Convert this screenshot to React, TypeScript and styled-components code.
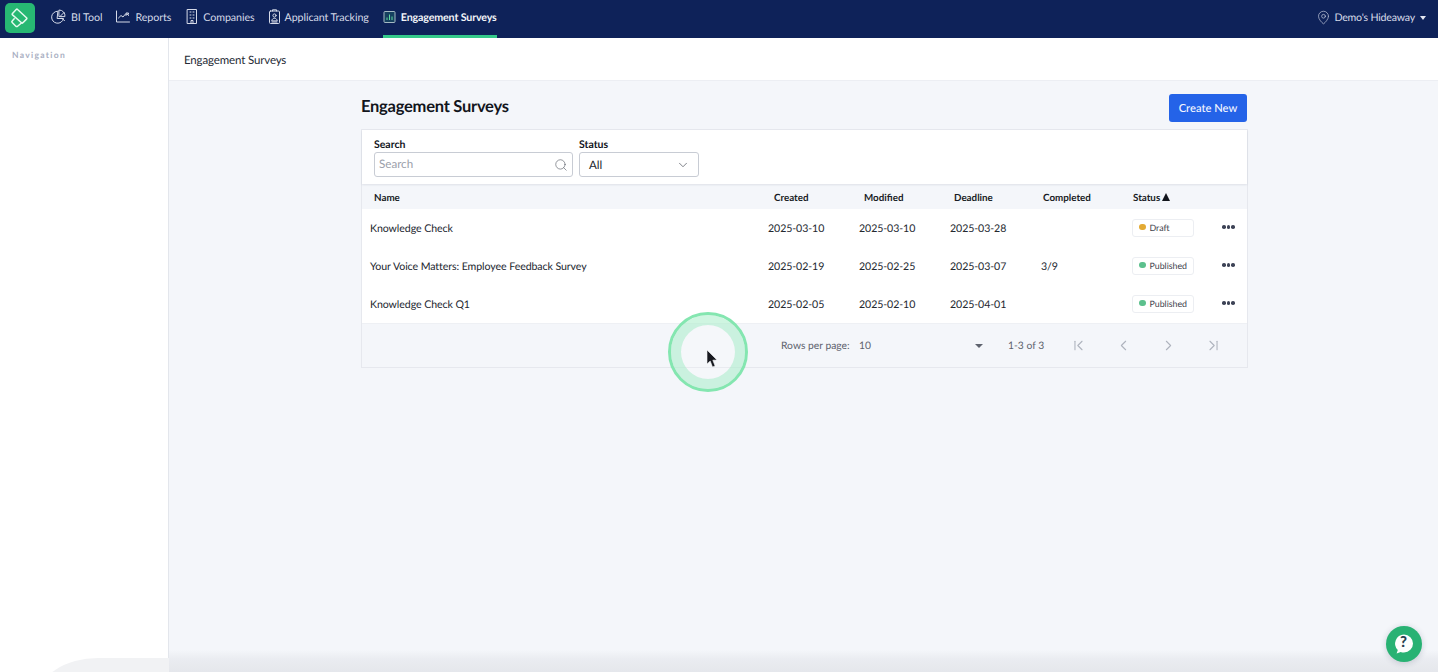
import React from "react";
import styled, { createGlobalStyle } from "styled-components";
import { ChevronDown, ChevronFirst, ChevronLast, ChevronLeft, ChevronRight, MapPin, Search } from "lucide-react";

const Global = createGlobalStyle`
  html, body { margin: 0; padding: 0; height: 100%; overflow: hidden; }
  body { font-family: Lato, "Liberation Sans", sans-serif; background: #fff; color: #1e2430; text-rendering: geometricPrecision; }
  * { box-sizing: border-box; }
`;

const Page = styled.div`
  position: relative;
  width: 1438px;
  height: 672px;
  display: flex;
  flex-direction: column;
  overflow: hidden;
`;

const TopBar = styled.header`
  height: 38px;
  flex: none;
  background: #0e2259;
  display: flex;
  align-items: stretch;
  padding: 0 12px 0 5px;
`;

const Logo = styled.div`
  width: 30px;
  height: 30px;
  margin: 3px 16px 0 0;
  border-radius: 5px;
  background: #27b873;
  display: flex;
  align-items: center;
  justify-content: center;
`;

const NavList = styled.nav`
  display: flex;
  align-items: stretch;
  gap: 14px;
`;

const NavItem = styled.a<{ $active?: boolean }>`
  display: flex;
  align-items: center;
  gap: 5px;
  height: 38px;
  font-size: 10.7px;
  letter-spacing: ${(p) => (p.$active ? "-0.15px" : "-0.08px")};
  font-weight: ${(p) => (p.$active ? 700 : 400)};
  color: ${(p) => (p.$active ? "#f2f4f8" : "#d5dae8")};
  border-bottom: 3px solid ${(p) => (p.$active ? "#35c98a" : "transparent")};
  svg { flex: none; margin-top: -2px; }
`;

const Location = styled.div`
  margin-left: auto;
  display: flex;
  align-items: center;
  gap: 3px;
  font-size: 10.6px;
  letter-spacing: -0.2px;
  color: #d5dae8;
  padding-bottom: 3px;
`;

const Caret = styled.span`
  width: 0;
  height: 0;
  border-left: 3.5px solid transparent;
  border-right: 3.5px solid transparent;
  border-top: 4px solid #e4e8f2;
  margin-left: 2px;
`;

const Body = styled.div`
  flex: 1;
  display: flex;
  min-height: 0;
`;

const Sidebar = styled.aside`
  width: 169px;
  flex: none;
  background: #fff;
  border-right: 1px solid #e3e6ec;
  padding: 12px;
`;

const SideTitle = styled.div`
  font-size: 8.5px;
  font-weight: 700;
  letter-spacing: 1.3px;
  color: #a9afc2;
`;

const Main = styled.main`
  flex: 1;
  background: #f4f6fa;
  min-width: 0;
`;

const Crumb = styled.div`
  height: 43px;
  background: #fff;
  border-bottom: 1px solid #eceef3;
  padding: 2px 15px 0;
  display: flex;
  align-items: center;
  font-size: 11.5px;
  letter-spacing: -0.14px;
  color: #262b36;
`;

const Content = styled.div`
  width: 887px;
  margin-left: 192px;
`;

const TitleRow = styled.div`
  height: 48px;
  display: flex;
  justify-content: space-between;
`;

const Title = styled.h1`
  margin: 14px 0 0;
  font-size: 16.5px;
  letter-spacing: -0.25px;
  line-height: 23px;
  font-weight: 700;
  color: #12151c;
`;

const CreateButton = styled.button`
  width: 78px;
  height: 28px;
  margin: 13px 1px 0 0;
  border: 0;
  border-radius: 3px;
  background: #2463e8;
  color: #f4f7ff;
  font: 500 11.2px Lato, sans-serif;
  text-rendering: geometricPrecision;
`;

const Card = styled.section`
  background: #fff;
  border: 1px solid #e6e8ee;
`;

const Filters = styled.div`
  height: 54px;
  padding: 8px 12px 0;
  display: flex;
  gap: 6px;
  box-shadow: 0 1px 2px rgba(30, 40, 70, 0.1);
  position: relative;
`;

const Field = styled.label<{ $width: number }>`
  width: ${(p) => p.$width}px;
  display: block;
`;

const FieldLabel = styled.div`
  font-size: 10.5px;
  font-weight: 700;
  line-height: 14px;
  color: #12151c;
`;

const InputBox = styled.div`
  height: 25px;
  border: 1px solid #c8ccd4;
  border-radius: 3px;
  background: #fff;
  display: flex;
  align-items: center;
  justify-content: space-between;
  padding: 0 4px;
  font-size: 11.6px;
  color: #9ba0aa;
`;

const SelectBox = styled(InputBox)`
  padding: 1px 8px 0 9px;
  color: #20242c;
  svg { margin-top: -1px; }
`;

const HeadRow = styled.div`
  height: 25px;
  padding-top: 2px;
  display: grid;
  grid-template-columns: 412px 90px 90px 89px 90px 1fr;
  align-items: center;
  background: #f4f6fa;
  font-size: 9.8px;
  font-weight: 700;
  color: #1a1d26;
`;

const HeadCell = styled.div<{ $first?: boolean }>`
  padding-left: ${(p) => (p.$first ? 12 : 0)}px;
  display: flex;
  align-items: center;
  gap: 2px;
`;

const SortUp = styled.span`
  width: 0;
  height: 0;
  border-left: 4.5px solid transparent;
  border-right: 4.5px solid transparent;
  border-bottom: 8px solid #12151c;
  margin-bottom: 1px;
`;

const Row = styled.div`
  height: 38px;
  padding-top: 2px;
  display: grid;
  grid-template-columns: 406px 91px 91px 91px 91px 90px 1fr;
  align-items: center;
  background: #fff;
  font-size: 10.6px;
  letter-spacing: -0.08px;
  color: #23272f;
`;

const NameCell = styled.div`
  padding-left: 8px;
`;

const Badge = styled.div`
  width: 62px;
  height: 18px;
  margin-top: -3px;
  border: 1px solid #eceef2;
  border-radius: 3px;
  display: flex;
  align-items: center;
  gap: 4px;
  padding: 0 0 1px 6px;
  font-size: 8.8px;
  letter-spacing: 0;
  color: #3c414b;
`;

const Dot = styled.span<{ $color: string }>`
  width: 6.5px;
  height: 6.5px;
  border-radius: 50%;
  background: ${(p) => p.$color};
`;

const More = styled.div`
  display: flex;
  gap: 1px;
  margin-top: -4px;
`;

const MoreDot = styled.span`
  width: 3.6px;
  height: 3.6px;
  border-radius: 50%;
  background: #3d4356;
`;

const Footer = styled.div`
  height: 44px;
  background: #f4f6fa;
  border-top: 1px solid #eef0f4;
  display: flex;
  align-items: center;
  padding-left: 419px;
  font-size: 10.3px;
  color: #5e636e;
`;

const RowsLabel = styled.span`
  width: 78px;
`;

const RowsValue = styled.span`
  width: 116px;
`;

const PageCaret = styled.span`
  width: 0;
  height: 0;
  border-left: 4px solid transparent;
  border-right: 4px solid transparent;
  border-top: 4px solid #5e636e;
  margin-right: 25px;
`;

const PageInfo = styled.span`
  width: 35px;
  margin-right: 27px;
  white-space: nowrap;
`;

const PagerGroup = styled.div`
  display: flex;
  gap: 28px;
  color: #aeb3bd;
`;

const Ripple = styled.div`
  position: absolute;
  left: 668px;
  top: 312px;
  width: 80px;
  height: 80px;
  border-radius: 50%;
  background: rgba(255, 255, 255, 0.15);
  border: 3px solid #84e6b0;
  box-shadow: inset 0 0 0 10px rgba(160, 235, 195, 0.5);
`;

const CursorWrap = styled.div`
  position: absolute;
  left: 706px;
  top: 350px;
  line-height: 0;
`;

const BottomFade = styled.div`
  position: absolute;
  left: 169px;
  right: 0;
  bottom: 0;
  height: 22px;
  background: linear-gradient(to bottom, rgba(225, 227, 232, 0), rgba(225, 227, 232, 0.5) 40%, rgba(225, 227, 232, 0.8));
  pointer-events: none;
`;

const SideCurve = styled.div`
  position: absolute;
  left: 38px;
  bottom: -40px;
  width: 131px;
  height: 54px;
  border-top-left-radius: 60px 40px;
  background: #f1f2f4;
`;

const HelpButton = styled.div`
  position: absolute;
  left: 1386px;
  top: 626px;
  width: 36px;
  height: 36px;
  border-radius: 50%;
  background: #28b273;
  display: flex;
  align-items: center;
  justify-content: center;
  box-shadow: 0 1px 6px rgba(30, 40, 70, 0.2);
`;

const HelpMark = styled.span`
  position: absolute;
  left: 14px;
  top: 7px;
  font: 900 15px Lato, sans-serif;
  color: #27404f;
`;

const stroke = { fill: "none", stroke: "currentColor", strokeWidth: 1, strokeLinecap: "round" as const, strokeLinejoin: "round" as const };

const LogoMark = () => (
  <svg width="18" height="20" viewBox="0 0 18 20" fill="none" stroke="#e6f9ef" strokeWidth="1.5" strokeLinejoin="round" strokeLinecap="round">
    <path d="M1.500 5.500 5.200 1.500a1 1 0 0 1 1.400 0l8.900 8.200a1 1 0 0 1 0 1.400l-3.600 3.700a1 1 0 0 1-1.400 0L1.500 6.900a1 1 0 0 1 0-1.400z" />
    <path d="M3.200 10.800 1.200 13a1 1 0 0 0 0 1.400l3.700 3.800a1.200 1.200 0 0 0 1.700 0L11 14.500" />
  </svg>
);

const PieIcon = () => (
  <svg width="15" height="15" viewBox="0 0 15 15" {...stroke}>
    <path d="M6.500 2.200a6 6 0 1 0 6 7.300H6.500z" />
    <path d="M8.300 1a5.600 5.600 0 0 1 5.600 6.600H8.300z" />
    <path d="M9 7.500 13 3.500M11 9.500l2.500 2" />
  </svg>
);

const LineChartIcon = () => (
  <svg width="14" height="13" viewBox="0 0 14 13" {...stroke}>
    <path d="M.5 1v11h13" />
    <path d="M2.500 8 5 5.500l2 1.500 2-2.500" />
    <path d="M10 5.500V3h2.500v1.200h-2.500M11.500 4.200l1 1.300" />
  </svg>
);

const BuildingIcon = () => (
  <svg width="13" height="15" viewBox="-2 0 13 15" {...stroke}>
    <rect x=".5" y=".5" width="9" height="14" />
    <path d="M3 3h1M6 3h1M3 6h1M6 6h1M3 9h1M6 9h1M4 14.500v-3h2v3" />
  </svg>
);

const BadgeIcon = () => (
  <svg width="11" height="15" viewBox="0 0 11 15" {...stroke}>
    <rect x=".5" y="2" width="10" height="12.500" rx="1" />
    <path d="M3.500 2V.8h4V2" />
    <circle cx="5.500" cy="6.500" r="1.600" />
    <path d="M2.800 11.500c.3-1.600 1.400-2.200 2.700-2.200s2.400.6 2.700 2.200zM3 13h5" />
  </svg>
);

const BarsIcon = () => (
  <svg width="13" height="12" viewBox="-0.500 0 13 12" fill="#15405f">
    <rect x=".5" y=".5" width="11" height="11" rx="1" stroke="#a4b9c3" strokeWidth="1" />
    <path d="M3.500 9V6.500M6 9V3.500M8.500 9V5.500" stroke="#5fd9a0" strokeWidth="1" />
  </svg>
);

const HelpBubble = () => (
  <svg width="22" height="22" viewBox="0 0 22 22">
    <path d="M11 1.500a9 9 0 0 1 0 18c-1.200 0-2.300-.2-3.300-.6L3.600 20.500l1.200-3.600A9 9 0 0 1 11 1.500z" fill="#fdfefd" />
  </svg>
);

const CursorArrow = () => (
  <svg width="12" height="18" viewBox="0 0 12 18">
    <path d="M1 0v14l3.200-3 2.300 6 2.600-1-2.300-5.800L11 10z" fill="#17191f" stroke="#f4f5f7" strokeWidth=".6" />
  </svg>
);

const rows = [
  { name: "Knowledge Check", created: "2025-03-10", modified: "2025-03-10", deadline: "2025-03-28", done: "", status: "Draft", color: "#e3aa33" },
  { name: "Your Voice Matters: Employee Feedback Survey", created: "2025-02-19", modified: "2025-02-25", deadline: "2025-03-07", done: "3/9", status: "Published", color: "#5cc08d" },
  { name: "Knowledge Check Q1", created: "2025-02-05", modified: "2025-02-10", deadline: "2025-04-01", done: "", status: "Published", color: "#5cc08d" },
];

export default function App() {
  return (
    <Page>
      <Global />
      <TopBar>
        <Logo><LogoMark /></Logo>
        <NavList>
          <NavItem><PieIcon />BI Tool</NavItem>
          <NavItem><LineChartIcon />Reports</NavItem>
          <NavItem><BuildingIcon />Companies</NavItem>
          <NavItem><BadgeIcon />Applicant Tracking</NavItem>
          <NavItem $active><BarsIcon />Engagement Surveys</NavItem>
        </NavList>
        <Location>
          <MapPin size={15} strokeWidth={1} />
          Demo's Hideaway
          <Caret />
        </Location>
      </TopBar>
      <Body>
        <Sidebar><SideTitle>Navigation</SideTitle></Sidebar>
        <Main>
          <Crumb>Engagement Surveys</Crumb>
          <Content>
            <TitleRow>
              <Title>Engagement Surveys</Title>
              <CreateButton>Create New</CreateButton>
            </TitleRow>
            <Card>
              <Filters>
                <Field $width={199}>
                  <FieldLabel>Search</FieldLabel>
                  <InputBox>Search<Search size={14} strokeWidth={1} color="#4a4f59" /></InputBox>
                </Field>
                <Field $width={120}>
                  <FieldLabel>Status</FieldLabel>
                  <SelectBox>All<ChevronDown size={14} strokeWidth={1.2} color="#4a4f59" /></SelectBox>
                </Field>
              </Filters>
              <HeadRow>
                <HeadCell $first>Name</HeadCell>
                <HeadCell>Created</HeadCell>
                <HeadCell>Modified</HeadCell>
                <HeadCell>Deadline</HeadCell>
                <HeadCell>Completed</HeadCell>
                <HeadCell>Status <SortUp /></HeadCell>
              </HeadRow>
              {rows.map((r) => (
                <Row key={r.name}>
                  <NameCell>{r.name}</NameCell>
                  <div>{r.created}</div>
                  <div>{r.modified}</div>
                  <div>{r.deadline}</div>
                  <div>{r.done}</div>
                  <Badge><Dot $color={r.color} />{r.status}</Badge>
                  <More><MoreDot /><MoreDot /><MoreDot /></More>
                </Row>
              ))}
              <Footer>
                <RowsLabel>Rows per page:</RowsLabel>
                <RowsValue>10</RowsValue>
                <PageCaret />
                <PageInfo>1-3 of 3</PageInfo>
                <PagerGroup>
                  <ChevronFirst size={17} strokeWidth={1.5} />
                  <ChevronLeft size={17} strokeWidth={1.5} />
                  <ChevronRight size={17} strokeWidth={1.5} />
                  <ChevronLast size={17} strokeWidth={1.5} />
                </PagerGroup>
              </Footer>
            </Card>
          </Content>
        </Main>
      </Body>
      <SideCurve />
      <BottomFade />
      <Ripple />
      <CursorWrap><CursorArrow /></CursorWrap>
      <HelpButton>
        <HelpBubble />
        <HelpMark>?</HelpMark>
      </HelpButton>
    </Page>
  );
}
